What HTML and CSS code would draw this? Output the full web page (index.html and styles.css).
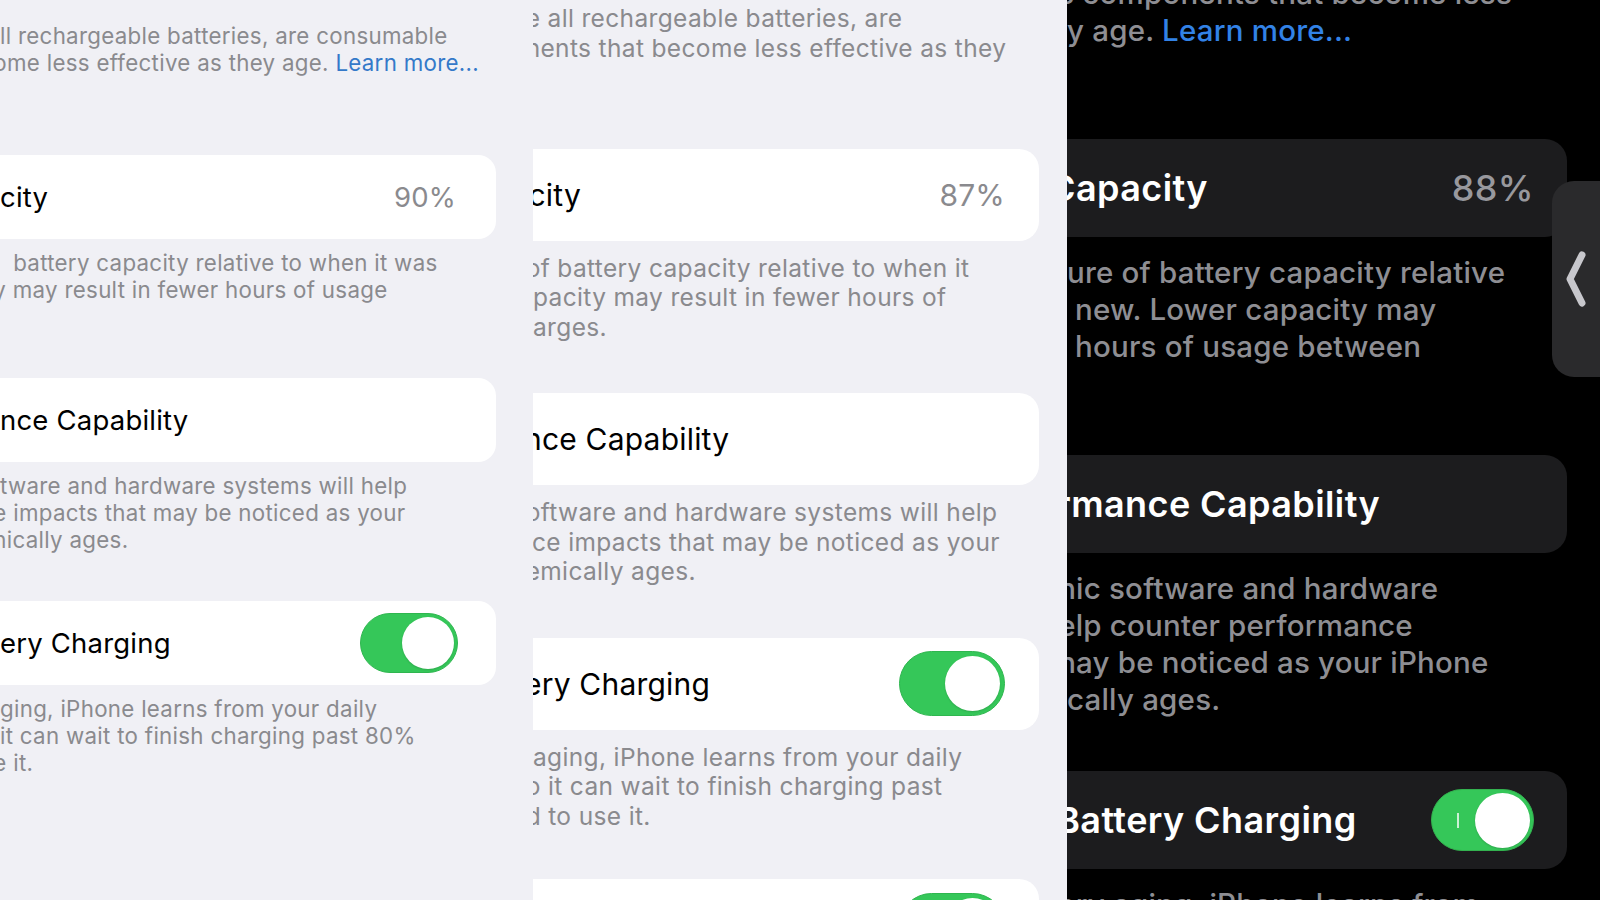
FILE: index.html
```html
<!DOCTYPE html>
<html>
<head lang="en">
    <meta charset="UTF-8">
    <title>Battery Health</title>
    <link rel="stylesheet" href="styles.css">
</head>
<body>
    <div class="screens">
        <!-- first phone, light -->
        <section class="panel panel-left">
            <div class="note first">
                <p>ll rechargeable batteries, are consumable</p>
                <p class="cut">ome less effective as they age. <a href="#">Learn more...</a></p>
            </div>
            <div class="cell first">
                <span class="label">city</span>
                <span class="value">90%</span>
            </div>
            <div class="note">
                <p>&nbsp; battery capacity relative to when it was</p>
                <p class="cut">y may result in fewer hours of usage</p>
                <p>&nbsp;</p>
            </div>
            <div class="cell">
                <span class="label">nce Capability</span>
            </div>
            <div class="note">
                <p>tware and hardware systems will help</p>
                <p class="cut">e impacts that may be noticed as your</p>
                <p class="cut">nically ages.</p>
            </div>
            <div class="cell">
                <span class="label">ery Charging</span>
                <span class="toggle"><span class="knob"></span></span>
            </div>
            <div class="note">
                <p>ging, iPhone learns from your daily</p>
                <p>it can wait to finish charging past 80%</p>
                <p class="cut">e it.</p>
            </div>
        </section>

        <!-- second phone, light, bigger -->
        <section class="panel panel-mid">
            <div class="note first">
                <p class="cut">e all rechargeable batteries, are</p>
                <p class="cut">nents that become less effective as they</p>
                <p>&nbsp;</p>
            </div>
            <div class="cell first">
                <span class="label cut light-cut">city</span>
                <span class="value">87%</span>
            </div>
            <div class="note">
                <p class="cut">of battery capacity relative to when it</p>
                <p>pacity may result in fewer hours of</p>
                <p>arges.</p>
            </div>
            <div class="cell">
                <span class="label cut">nce Capability</span>
            </div>
            <div class="note">
                <p class="cut">oftware and hardware systems will help</p>
                <p class="cut">ice impacts that may be noticed as your</p>
                <p class="cut">emically ages.</p>
            </div>
            <div class="cell">
                <span class="label cut">ery Charging</span>
                <span class="toggle"><span class="knob"></span></span>
            </div>
            <div class="note">
                <p>aging, iPhone learns from your daily</p>
                <p class="cut">o it can wait to finish charging past</p>
                <p class="cut">d to use it.</p>
            </div>
            <div class="cell last">
                <span class="label">&nbsp;</span>
                <span class="toggle"><span class="knob"></span></span>
            </div>
        </section>

        <!-- third phone, dark -->
        <section class="panel panel-dark">
            <div class="note first">
                <p class="cut">s components that become less</p>
                <p>y age. <a href="#">Learn more...</a></p>
            </div>
            <div class="cell first">
                <span class="label cut deep-cut">Capacity</span>
                <span class="value">88%</span>
            </div>
            <div class="note">
                <p>ure of battery capacity relative</p>
                <p>&nbsp;new. Lower capacity may</p>
                <p>&nbsp;hours of usage between</p>
                <p>&nbsp;</p>
            </div>
            <div class="cell">
                <span class="label cut">rmance Capability</span>
            </div>
            <div class="note">
                <p class="cut">nic software and hardware</p>
                <p class="cut">elp counter performance</p>
                <p class="cut">nay be noticed as your iPhone</p>
                <p>cally ages.</p>
            </div>
            <div class="cell">
                <span class="label cut">Battery Charging</span>
                <span class="toggle"><span class="mark"></span><span class="knob"></span></span>
            </div>
            <div class="note">
                <p class="cut">ery aging, iPhone learns from</p>
            </div>
            <div class="side-tab">
                <svg width="24" height="58" viewBox="0 0 24 58">
                    <path d="M18 5 L6 29 L18 53" fill="none" stroke="#c7c7cc" stroke-width="7" stroke-linecap="round" stroke-linejoin="round"/>
                </svg>
            </div>
        </section>
    </div>
</body>
</html>
```

FILE: styles.css
```css
*{
    padding: 0;
    margin: 0;
    box-sizing: border-box;
}
a{
    text-decoration: none;
}
body{
    font-family: Inter, "Liberation Sans", sans-serif;
    background: #000;
    overflow: hidden;
}
.screens{
    display: grid;
    grid-template-columns: 533px 534px 533px;
    height: 900px;
}
.panel{
    position: relative;
    overflow: hidden;
    background: #f0f0f5;
}
.note p{
    white-space: nowrap;
    color: #8a8a8e;
}
.note a{
    color: #3479c9;
}
.cut{
    margin-left: -0.3em;
}
.cell{
    display: flex;
    align-items: center;
    justify-content: space-between;
    margin-left: -40px;
    background: #fff;
    white-space: nowrap;
}
.label{
    color: #000;
    padding-left: 40px;
}
.label.cut{
    margin-left: 0;
    padding-left: calc(40px - 0.3em);
}
.label.light-cut{
    padding-left: calc(40px - 0.15em);
}
.label.deep-cut{
    padding-left: calc(40px - 0.5em);
}
.value{
    color: #8a8a8e;
}
.toggle{
    display: flex;
    align-items: center;
    justify-content: flex-end;
    background: #35c759;
    border: 1px solid #2fb64f;
}
.knob{
    background: #fff;
    border-radius: 50%;
    box-shadow: 0 1px 2px rgba(0,0,0,0.15);
}

/* left phone */
.panel-left{
    padding-top: 22px;
}
.panel-left .note{
    font-size: 22.3px;
    letter-spacing: 0.3px;
    line-height: 27px;
    margin-top: 10px;
}
.panel-left .note.first{
    margin-top: 0;
}
.panel-left .cell{
    height: 84px;
    margin-top: 48px;
    margin-right: 37px;
    padding-right: 40px;
    border-radius: 18px;
    font-size: 27.5px;
    letter-spacing: 0.2px;
}
.panel-left .cell.first{
    margin-top: 79px;
}
.panel-left .toggle{
    width: 98px;
    height: 60px;
    border-radius: 30px;
    padding: 3px;
    margin-right: -2px;
}
.panel-left .knob{
    width: 52px;
    height: 52px;
}

/* middle phone */
.panel-mid{
    padding-top: 4px;
}
.panel-mid .note{
    font-size: 24.5px;
    letter-spacing: 0.35px;
    line-height: 29.5px;
    margin-top: 13px;
}
.panel-mid .note.first{
    margin-top: 0;
}
.panel-mid .cell{
    height: 92px;
    margin-top: 51px;
    margin-right: 28px;
    padding-right: 34px;
    border-radius: 20px;
    font-size: 30px;
    letter-spacing: 0.2px;
}
.panel-mid .cell.first{
    margin-top: 56px;
}
.panel-mid .cell.last{
    margin-top: 48px;
}
.panel-mid .toggle{
    width: 106px;
    height: 65px;
    border-radius: 33px;
    padding: 4px;
}
.panel-mid .knob{
    width: 55px;
    height: 55px;
}

/* dark phone */
.panel-dark{
    background: #000;
}
.panel-dark .note{
    font-size: 29.5px;
    letter-spacing: 0.2px;
    font-weight: 500;
    line-height: 37px;
    margin-top: 17px;
}
.panel-dark .note p{
    color: #8e8e93;
}
.panel-dark .note a{
    color: #3282e6;
}
.panel-dark .note.first{
    margin-top: -25px;
}
.panel-dark .cell{
    height: 98px;
    margin-top: 53px;
    margin-right: 33px;
    padding-right: 33px;
    border-radius: 22px;
    background: #1c1c1e;
    font-size: 36px;
    letter-spacing: 0.4px;
    font-weight: 600;
}
.panel-dark .cell.first{
    margin-top: 90px;
}
.panel-dark .label{
    color: #fff;
}
.panel-dark .value{
    color: #98989d;
    font-weight: 500;
}
.panel-dark .toggle{
    width: 103px;
    height: 62px;
    border-radius: 31px;
    padding: 3px;
    justify-content: space-between;
    border-color: #33b24f;
}
.panel-dark .knob{
    width: 55px;
    height: 55px;
}
.panel-dark .mark{
    width: 2px;
    height: 15px;
    margin-left: 22px;
    background: rgba(255,255,255,0.75);
}
.side-tab{
    position: absolute;
    top: 181px;
    left: 485px;
    width: 60px;
    height: 196px;
    border-radius: 22px 0 0 22px;
    background: #2a2a2c;
    display: flex;
    align-items: center;
    padding-left: 12px;
}
```
